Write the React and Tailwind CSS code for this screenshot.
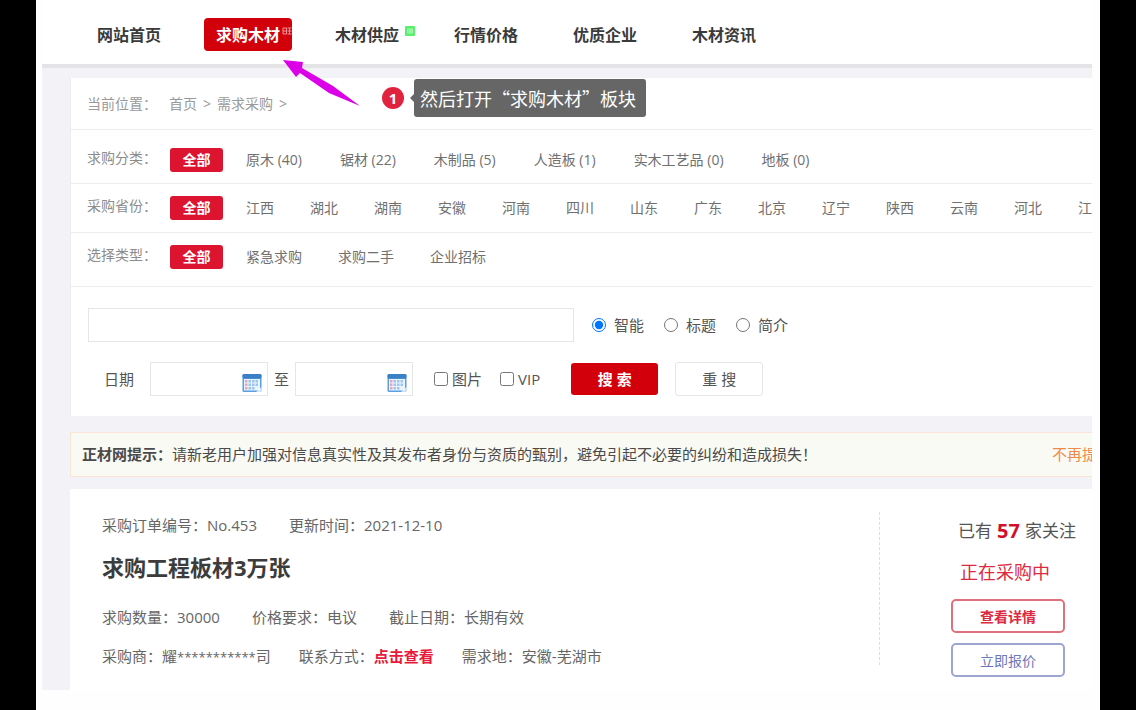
import { useState } from 'react';

const navItems = ['网站首页', '求购木材', '木材供应', '行情价格', '优质企业', '木材资讯'];

const filters = [
    {
        label: '求购分类：',
        pad: 'pt-[18px] pb-[11px]',
        gap: 'gap-[38px]',
        items: ['原木 (40)', '锯材 (22)', '木制品 (5)', '人造板 (1)', '实木工艺品 (0)', '地板 (0)'],
    },
    {
        label: '采购省份：',
        pad: 'pt-3 pb-3',
        gap: 'gap-9',
        items: ['江西', '湖北', '湖南', '安徽', '河南', '四川', '山东', '广东', '北京', '辽宁', '陕西', '云南', '河北', '江苏'],
    },
    {
        label: '选择类型：',
        pad: 'pt-3 pb-[17px]',
        gap: 'gap-9',
        items: ['紧急求购', '求购二手', '企业招标'],
    },
];

const CalendarIcon = () => (
    <svg viewBox="0 0 20 20" className="absolute right-1.5 bottom-[3px] w-5 h-5" aria-hidden="true">
        <rect x="0.5" y="1" width="19" height="18" rx="1.5" fill="#5b9fe0" />
        <rect x="0.5" y="1" width="19" height="4.5" rx="1.5" fill="#3b7fc4" />
        <rect x="2" y="6" width="16" height="11.5" fill="#eaf4fd" />
        <g fill="#9cc6ef">
            <rect x="6.5" y="7" width="2.5" height="2.5" />
            <rect x="10" y="7" width="2.5" height="2.5" />
            <rect x="13.5" y="7" width="2.5" height="2.5" />
            <rect x="6.5" y="10.5" width="2.5" height="2.5" />
            <rect x="10" y="10.5" width="2.5" height="2.5" />
            <rect x="13.5" y="10.5" width="2.5" height="2.5" />
            <rect x="6.5" y="14" width="2.5" height="2.5" />
            <rect x="10" y="14" width="2.5" height="2.5" />
        </g>
        <g fill="#e3a5bd">
            <rect x="3" y="7" width="2.5" height="2.5" />
            <rect x="3" y="10.5" width="2.5" height="2.5" />
            <rect x="3" y="14" width="2.5" height="2.5" />
        </g>
        <path d="M14 19l5.5-5v3.5a1.5 1.5 0 0 1-1.500 1.500z" fill="#fff" opacity="0.7" />
    </svg>
);

const DateField = ({ label }) => (
    <div className="relative">
        <input type="text" aria-label={label} className="block w-[118px] h-[34px] pl-2 pr-8 bg-white border border-[#e6e6e8] outline-none" />
        <CalendarIcon />
    </div>
);

const NavBadge = ({ green }) => (
    <svg
        viewBox="0 0 10 10"
        className={green ? 'absolute -right-1 top-2 w-2.5 h-2.5' : 'absolute right-0 top-2 w-2.5 h-2.5'}
        aria-hidden="true"
    >
        {green && <rect width="10" height="10" rx="1" fill="#56f06a" />}
        <path
            d={green ? 'M2.500 3h5v4h-5zM5 3v4M2.500 5h5' : 'M1 2h3.500v6H1zM1 5h3.500M5.500 2h4M5.500 5h4M5.500 8h4M7.500 2v6'}
            fill="none"
            stroke={green ? '#b6f9bf' : '#f3a3a3'}
            strokeWidth="0.9"
        />
    </svg>
);

const Header = () => (
    <header className="h-[68px] bg-white border-b-4 border-[#e4e4e7]">
        <nav className="flex gap-[31px] pl-[43px] pt-[18px]">
            {navItems.map((item, i) => (
                <a
                    key={item}
                    href="#"
                    className={`relative w-[88px] h-[33px] leading-[34px] text-center text-[16px] font-bold rounded-[4px] whitespace-nowrap ${
                        i === 1 ? 'bg-[#d2000b] text-white' : 'text-[#3a3a3a]'
                    }`}
                >
                    {item}
                    {i === 1 && <NavBadge />}
                    {i === 2 && <NavBadge green />}
                </a>
            ))}
        </nav>
    </header>
);

const FilterRow = ({ label, pad, gap, items }) => (
    <div className={`flex items-start pl-4 border-t border-[#ececef] text-[14px] whitespace-nowrap ${pad}`}>
        <span className="w-[83px] shrink-0 leading-5 text-[#8c8c8c]">{label}</span>
        <a href="#" className="w-[53px] h-6 mr-[23px] shrink-0 leading-6 text-center font-bold text-white bg-[#dd1430] rounded-[3px]">
            全部
        </a>
        <div className={`flex leading-6 text-[#707070] ${gap}`}>
            {items.map((item) => (
                <a key={item} href="#">{item}</a>
            ))}
        </div>
    </div>
);

const SearchForm = () => {
    const [mode, setMode] = useState('智能');

    return (
        <form className="pl-[17px] pt-[21px] pb-5 border-t border-[#ececef] text-[15px] text-[#555] whitespace-nowrap">
            <div className="flex items-center">
                <input type="text" aria-label="关键词" className="w-[486px] h-[34px] px-2 bg-white border border-[#e6e6e8] outline-none" />
                <div className="flex gap-5 ml-[18px]">
                    {['智能', '标题', '简介'].map((m) => (
                        <label key={m} className="flex items-center gap-2">
                            <input type="radio" name="mode" checked={mode === m} onChange={() => setMode(m)} className="w-3.5 h-3.5" />
                            {m}
                        </label>
                    ))}
                </div>
            </div>
            <div className="flex items-center mt-5 pl-4">
                <span className="w-[46px]">日期</span>
                <DateField label="开始日期" />
                <span className="px-[6px]">至</span>
                <DateField label="结束日期" />
                <label className="flex items-center gap-1 ml-[21px]">
                    <input type="checkbox" className="w-3.5 h-3.5" />
                    图片
                </label>
                <label className="flex items-center gap-1 ml-[18px]">
                    <input type="checkbox" className="w-3.5 h-3.5" />
                    VIP
                </label>
                <button type="button" className="w-[87px] h-8 ml-[31px] font-bold text-white bg-[#d2000b] rounded-[3px]">搜 索</button>
                <button type="reset" className="w-[88px] h-[34px] ml-[17px] bg-white border border-[#e6e6e8] rounded-[3px]">重 搜</button>
            </div>
        </form>
    );
};

const Notice = () => (
    <div className="flex justify-between items-center h-[45px] mt-4 pl-[11px] bg-[#fafaf4] border-y border-l border-[#fbe3d6] text-[15px] text-[#4a4a4a] whitespace-nowrap">
        <p>
            <strong>正材网提示：</strong>
            请新老用户加强对信息真实性及其发布者身份与资质的甄别，避免引起不必要的纠纷和造成损失！
        </p>
        <a href="#" className="-mr-5 text-[#f08a4b]">不再提示</a>
    </div>
);

const OrderCard = () => (
    <article className="flex justify-between h-[201px] mt-3 pl-8 bg-white text-[15px] text-[#666] whitespace-nowrap">
        <div className="pt-[26px]">
            <div className="flex gap-8 leading-5">
                <span>采购订单编号：No.453</span>
                <span>更新时间：2021-12-10</span>
            </div>
            <h2 className="mt-4 leading-8 text-[22px] font-bold text-[#3c3c3c]">求购工程板材3万张</h2>
            <div className="flex gap-8 mt-6 leading-5">
                <span>求购数量：30000</span>
                <span>价格要求：电议</span>
                <span>截止日期：长期有效</span>
            </div>
            <div className="flex gap-7 mt-[19px] leading-5">
                <span>
                    采购商：耀<span className="text-[13px]">***********</span>司
                </span>
                <span>
                    联系方式：<a href="#" className="font-bold text-[#e8193c]">点击查看</a>
                </span>
                <span>需求地：安徽-芜湖市</span>
            </div>
        </div>
        <div className="flex w-[213px] h-[153px] mt-[23px] border-l border-dashed border-[#dedede]">
            <div className="flex flex-col items-center w-full pl-14">
                <p className="flex items-center gap-[5px] pl-1.5 pt-[3px] leading-8 text-[17px] text-[#555]">
                    已有<b className="text-[20px] text-[#d2102c]">57</b>家关注
                </p>
                <p className="pr-[18px] mt-[9px] leading-8 text-[18px] text-[#dc2a42]">正在采购中</p>
                <div className="flex flex-col gap-[10px] mt-[11px] pr-[12px] text-[14px]">
                    <button type="button" className="w-[114px] h-[34px] shrink-0 font-bold text-[#dc2a42] border-2 border-[#e0707f] rounded-[5px]">查看详情</button>
                    <button type="button" className="w-[114px] h-[34px] shrink-0 text-[#6c76b8] border-2 border-[#9da5d3] rounded-[5px]">立即报价</button>
                </div>
            </div>
        </div>
    </article>
);

// Step hint laid over the page
const StepHint = () => (
    <>
        <svg viewBox="0 0 78 48" className="absolute left-[247px] top-[59px] w-[78px] h-12" aria-hidden="true">
            <path d="M0 1L20 3L19 9L50 27L77 47L46 34L17 14L13 18Z" fill="#dc00e8" />
        </svg>
        <div className="absolute left-[346px] top-[79px] flex items-center whitespace-nowrap">
            <span className="w-[22px] h-[22px] leading-[22px] text-center text-[15px] font-bold text-white bg-[#e02440] rounded-full">1</span>
            <span className="ml-1.5 border-y-4 border-y-transparent border-r-4 border-r-[#666]" />
            <span className="h-[38px] pl-1.5 pr-2.5 leading-[38px] text-[18px] text-white bg-[#666] rounded-[3px] font-['Noto_Sans_CJK_SC',sans-serif]">
                然后打开“求购木材”板块
            </span>
        </div>
    </>
);

const App = () => (
    <div lang="zh-CN" className="min-h-screen flex px-9 bg-black font-['Open_Sans','Noto_Sans_CJK_SC',sans-serif]">
        <div className="relative flex-1 min-w-0 pl-1.5 pr-2 bg-[#fefefe]">
            <div className="overflow-hidden">
                <Header />
                <main className="pl-7 pt-[10px] bg-[#f3f3f7]">
                    <section className="bg-white border-l border-[#ececef]">
                        <div className="flex gap-1.5 h-[51px] items-center pl-4 text-[14px] text-[#999] whitespace-nowrap">
                            <span className="w-[76px]">当前位置：</span>
                            <a href="#">首页</a>
                            <span>&gt;</span>
                            <a href="#">需求采购</a>
                            <span>&gt;</span>
                        </div>
                        {filters.map((f) => (
                            <FilterRow key={f.label} {...f} />
                        ))}
                        <SearchForm />
                    </section>
                    <Notice />
                    <OrderCard />
                </main>
            </div>
            <StepHint />
        </div>
    </div>
);

export default App;
